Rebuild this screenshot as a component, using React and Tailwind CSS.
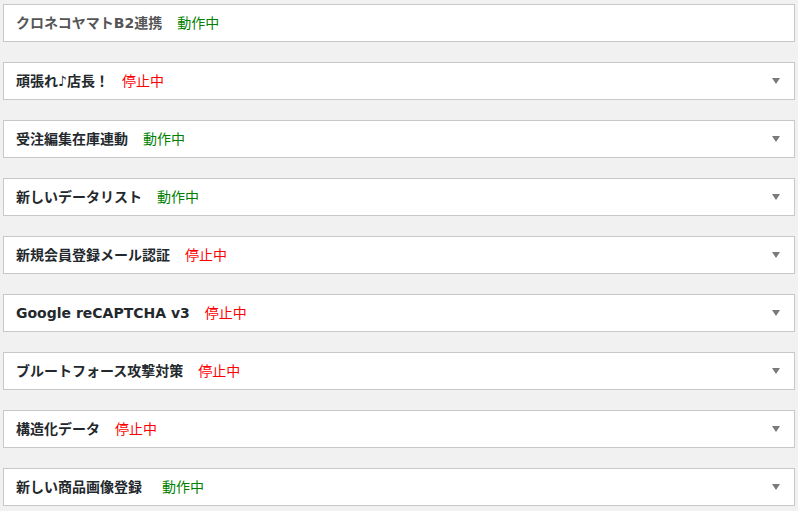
import React from 'react';

// 拡張機能の一覧
const items = [
  { name: 'クロネコヤマトB2連携', active: true, muted: true, arrow: false },
  { name: '頑張れ♪店長！', active: false, gap: 'ml-[13px]' },
  { name: '受注編集在庫連動', active: true },
  { name: '新しいデータリスト', active: true },
  { name: '新規会員登録メール認証', active: false },
  { name: 'Google reCAPTCHA v3', active: false },
  { name: 'ブルートフォース攻撃対策', active: false },
  { name: '構造化データ', active: false },
  { name: '新しい商品画像登録', active: true, gap: 'ml-[20px]' },
];

const Panel = ({ name, active, muted, gap = 'ml-[15px]', arrow = true }) => (
  <div className="h-[38px] bg-white border border-[#c8c8c8] flex items-center pl-[12px] pr-[14px]">
    <span className={`font-bold text-[14px] ${muted ? 'text-[#555]' : 'text-[#23282d]'}`}>{name}</span>
    <span className={`${gap} text-[14px] ${active ? 'text-[#008000]' : 'text-[#ff0000]'}`}>
      {active ? '動作中' : '停止中'}
    </span>
    {arrow && (
      <svg className="ml-auto" width="8" height="6" viewBox="0 0 8 6">
        <path d="M0 0 L8 0 L4 6 Z" fill="#7a7a7a" />
      </svg>
    )}
  </div>
);

export default function App() {
  return (
    <div
      className="w-[798px] h-[511px] bg-[#f1f1f1] pl-[3px] pr-[3px] pt-[4px] flex flex-col gap-[20px] overflow-hidden"
      style={{ fontFamily: '"DejaVu Sans", "Noto Sans CJK JP", sans-serif' }}
    >
      {items.map(it => (
        <Panel key={it.name} {...it} />
      ))}
    </div>
  );
}
